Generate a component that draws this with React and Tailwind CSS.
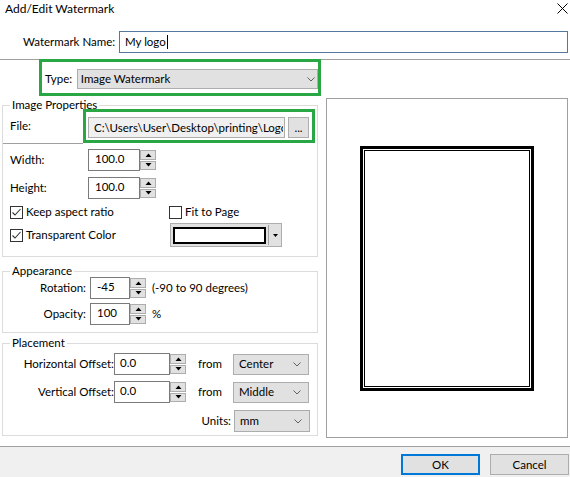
import React from "react";

function Chevron() {
  return (
    <svg width="8" height="5" viewBox="0 0 8 5">
      <path d="M0.5 0.5 L4 4 L7.5 0.5" fill="none" stroke="#606060" strokeWidth="1" />
    </svg>
  );
}

function Spin() {
  return (
    <div className="w-[16px] h-[22px] flex flex-col gap-[1px] py-[1px]">
      <div className="flex-1 bg-[#e1e1e1] border border-[#adadad] flex items-center justify-center">
        <svg width="7" height="4" viewBox="0 0 7 4"><path d="M0.5 4 L3.5 0.5 L6.5 4Z" fill="#000" /></svg>
      </div>
      <div className="flex-1 bg-[#e1e1e1] border border-[#adadad] flex items-center justify-center">
        <svg width="7" height="4" viewBox="0 0 7 4"><path d="M0.5 0 L3.5 3.5 L6.5 0Z" fill="#000" /></svg>
      </div>
    </div>
  );
}

function Check({ checked }) {
  return (
    <div className="w-[13px] h-[13px] border border-[#333] bg-white flex items-center justify-center shrink-0">
      {checked && (
        <svg width="11" height="11" viewBox="0 0 11 11">
          <path d="M1.5 5.5 L4 8 L9.5 2" fill="none" stroke="#333" strokeWidth="1.1" />
        </svg>
      )}
    </div>
  );
}

function Legend({ children }) {
  return (
    <div className="absolute -top-[8px] left-[7px] bg-white px-[2px] leading-[14px]">{children}</div>
  );
}

export default function App() {
  return (
    <div className="w-[570px] h-[477px] bg-white text-black text-[11.5px] leading-[16px] font-['Lato',sans-serif] whitespace-nowrap flex flex-col overflow-hidden">
      {/* title */}
      <div className="h-[20px] flex items-start justify-between pl-[5px] pr-[2px]">
        <div className="pt-[1px] text-[12px]">Add/Edit Watermark</div>
        <svg width="11" height="11" viewBox="0 0 11 11" className="mt-[3px]">
          <path d="M0.5 0.5 L10.5 10.5 M10.5 0.5 L0.5 10.5" stroke="#000" strokeWidth="1" />
        </svg>
      </div>
      {/* name row */}
      <div className="mt-[11px] h-[22px] flex items-center pl-[23px]">
        <div className="w-[92px]">Watermark Name:</div>
        <div className="ml-[4px] w-[449px] h-[22px] border border-[#52789f] flex items-center pl-[5px]">
          My logo<span className="inline-block w-[1px] h-[14px] bg-black ml-[1px]" />
        </div>
      </div>
      <div className="mt-[6px] h-[1px] bg-[#a0a0a0]" />
      {/* type */}
      <div className="-mt-[1px] ml-[39px] w-[282px] h-[37px] border-[3px] border-[#29a745] flex items-start pt-[7px] pl-[3px]">
        <div className="w-[32px] h-[20px] flex items-center">Type:</div>
        <div className="w-[243px] h-[20px] bg-[#e1e1e1] border border-[#adadad] flex items-center justify-between pl-[3px] pr-[2px]">
          <span>Image Watermark</span>
          <Chevron />
        </div>
      </div>
      {/* main */}
      <div className="mt-[2px] flex items-start">
        <div className="ml-[2px] w-[316px] flex flex-col">
          {/* Image Properties */}
          <div className="relative mt-[7px] border border-[#dcdcdc] h-[152px] flex flex-col">
            <Legend>Image Properties</Legend>
            <div className="mt-[3px] flex items-center">
              <div className="w-[80px] pl-[7px]">File:</div>
              <div className="relative z-10 w-[232px] h-[34px] border-[3px] border-[#29a745] flex items-start pt-[5px] pl-[2px]">
                <div className="w-[197px] h-[21px] bg-[#f0f0f0] border border-[#adadad] flex items-center pl-[5px]">
                  <span className="block w-[189px] overflow-hidden">C:\Users\User\Desktop\printing\Logo.png</span>
                </div>
                <div className="ml-[3px] w-[21px] h-[21px] bg-[#e1e1e1] border border-[#adadad] flex items-center justify-center leading-[12px]">...</div>
              </div>
            </div>
            <div className="h-[1px] w-[80px] bg-[#a0a0a0]" />
            <div className="mt-[5px] flex items-center">
              <div className="w-[85px] pl-[7px]">Width:</div>
              <div className="w-[52px] h-[22px] border border-[#7a7a7a] flex items-start pt-[1px] pl-[6px]">100.0</div>
              <Spin />
            </div>
            <div className="mt-[6px] flex items-center">
              <div className="w-[85px] pl-[7px]">Height:</div>
              <div className="w-[52px] h-[22px] border border-[#7a7a7a] flex items-start pt-[1px] pl-[6px]">100.0</div>
              <Spin />
            </div>
            <div className="mt-[5px] h-[16px] flex items-center pl-[7px]">
              <div className="w-[159px] flex items-center gap-[3px]">
                <Check checked />
                <span>Keep aspect ratio</span>
              </div>
              <div className="flex items-center gap-[3px]">
                <Check />
                <span>Fit to Page</span>
              </div>
            </div>
            <div className="mt-[3px] h-[24px] flex items-center pl-[7px]">
              <div className="w-[160px] flex items-center gap-[3px]">
                <Check checked />
                <span>Transparent Color</span>
              </div>
              <div className="w-[112px] h-[24px] bg-[#e1e1e1] border border-[#adadad] flex items-center pl-[2px]">
                <div className="w-[93px] h-[17px] bg-white border-2 border-black" />
                <div className="ml-[2px] w-[1px] h-[20px] bg-[#a0a0a0]" />
                <div className="flex-1 flex justify-center">
                  <svg width="5" height="3" viewBox="0 0 5 3"><path d="M0 0 L5 0 L2.5 3Z" fill="#000" /></svg>
                </div>
              </div>
            </div>
          </div>
          {/* Appearance */}
          <div className="relative mt-[14px] border border-[#dcdcdc] h-[62px] flex flex-col">
            <Legend>Appearance</Legend>
            <div className="mt-[5px] flex items-center">
              <div className="w-[83px] text-right">Rotation:</div>
              <div className="ml-[4px] w-[40px] h-[22px] border border-[#7a7a7a] flex items-start pt-[1px] pl-[6px]">-45</div>
              <Spin />
              <div className="ml-[6px]">(-90 to 90 degrees)</div>
            </div>
            <div className="mt-[4px] flex items-center">
              <div className="w-[83px] text-right">Opacity:</div>
              <div className="ml-[4px] w-[40px] h-[22px] border border-[#7a7a7a] flex items-start pt-[1px] pl-[6px]">100</div>
              <Spin />
              <div className="ml-[6px]">%</div>
            </div>
          </div>
          {/* Placement */}
          <div className="relative mt-[10px] border border-[#dcdcdc] h-[93px] flex flex-col">
            <Legend>Placement</Legend>
            <div className="mt-[9px] flex items-center">
              <div className="w-[111px] text-right">Horizontal Offset:</div>
              <div className="w-[56px] h-[22px] border border-[#7a7a7a] flex items-start pt-[1px] pl-[5px]">0.0</div>
              <Spin />
              <div className="ml-[12px] w-[35px]">from</div>
              <div className="w-[76px] h-[21px] bg-[#e1e1e1] border border-[#adadad] flex items-center justify-between pl-[5px] pr-[7px]">
                <span>Center</span>
                <Chevron />
              </div>
            </div>
            <div className="mt-[6px] flex items-center">
              <div className="w-[111px] text-right">Vertical Offset:</div>
              <div className="w-[56px] h-[22px] border border-[#7a7a7a] flex items-start pt-[1px] pl-[5px]">0.0</div>
              <Spin />
              <div className="ml-[12px] w-[35px]">from</div>
              <div className="w-[76px] h-[21px] bg-[#e1e1e1] border border-[#adadad] flex items-center justify-between pl-[5px] pr-[7px]">
                <span>Middle</span>
                <Chevron />
              </div>
            </div>
            <div className="mt-[7px] flex items-center">
              <div className="w-[231px] text-right pr-[3px]">Units:</div>
              <div className="w-[76px] h-[22px] bg-[#e1e1e1] border border-[#adadad] flex items-center justify-between pl-[5px] pr-[7px]">
                <span>mm</span>
                <Chevron />
              </div>
            </div>
          </div>
        </div>
        {/* preview */}
        <div className="ml-[8px] w-[242px] h-[340px] border border-[#a0a0a0] flex items-center justify-center">
          <div className="w-[174px] h-[245px] border-[3px] border-black p-[1px]">
            <div className="w-full h-full border border-black" />
          </div>
        </div>
      </div>
      {/* footer */}
      <div className="mt-[8px] flex-1 bg-[#f0f0f0] border-t border-[#a0a0a0] flex items-start justify-end pt-[7px] pr-[1px] gap-[10px]">
        <div className="w-[79px] h-[21px] bg-[#e1e1e1] border-2 border-[#0078d7] flex items-center justify-center">OK</div>
        <div className="w-[79px] h-[21px] bg-[#e1e1e1] border border-[#adadad] flex items-center justify-center">Cancel</div>
      </div>
    </div>
  );
}
